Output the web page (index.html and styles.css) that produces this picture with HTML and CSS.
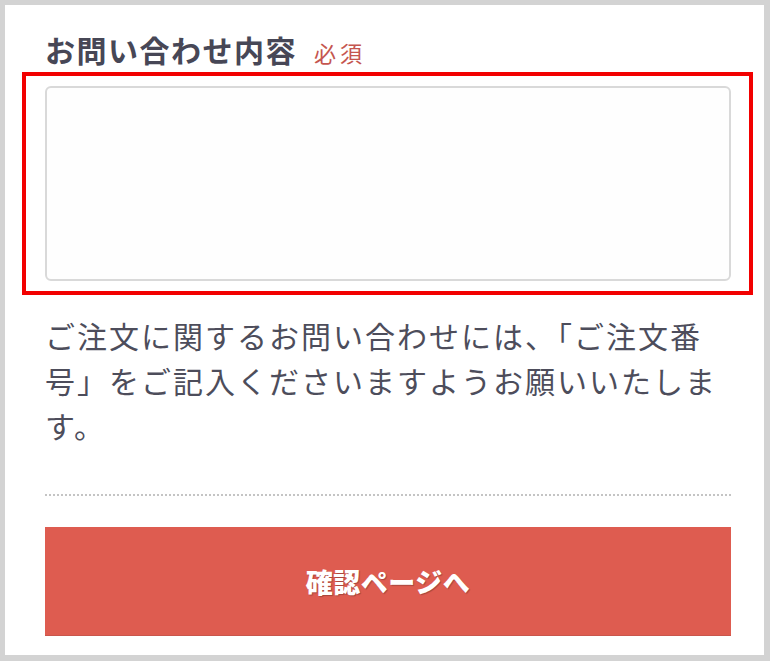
FILE: index.html
```html
<!DOCTYPE html>
<html lang="ja">
<head>
    <meta charset="utf-8">
    <title>お問い合わせ</title>
    <link rel="stylesheet" href="styles.css">
</head>
<body>

    <div class="panel">
        <form id="contactForm">
            <div class="label-row">
                <span class="label">お問い合わせ内容</span>
                <span class="required">必須</span>
            </div>

            <div class="highlight">
                <textarea id="message" class="message"></textarea>
            </div>

            <p class="note">ご注文に関するお問い合わせには、「ご注文番号」をご記入くださいますようお願いいたします。</p>

            <hr class="divider">

            <button type="submit" class="submit">確認ページへ</button>
        </form>
    </div>

</body>
</html>
```

FILE: styles.css
```css
html, body {
    margin: 0;
    height: 100%;
}
body {
    background-color: #d3d3d3;
    padding: 5px 6px 6px 5px;
    box-sizing: border-box;
    font-family: "Noto Sans CJK JP", "Noto Sans", sans-serif;
    color: #4a4a58;
}
.panel {
    background-color: #fff;
    height: 650px;
    box-sizing: border-box;
    padding: 26px 33px 19px 40px;
}
form {
    display: flex;
    flex-direction: column;
}
.label-row {
    display: flex;
    align-items: baseline;
    gap: 17px;
    height: 41px;
}
.label {
    font-size: 30px;
    line-height: 36px;
    font-weight: bold;
    letter-spacing: 1.5px;
    color: #474756;
}
.required {
    font-size: 22px;
    color: #c5564f;
    letter-spacing: 4px;
}

/* red frame drawn round the field */
.highlight {
    margin: 0 -22px 0 -23px;
    padding: 10px 18px 10px 19px;
    border: 4px solid #f20000;
}
.message {
    display: block;
    width: 100%;
    height: 195px;
    box-sizing: border-box;
    border: 2px solid #d9d9d9;
    border-radius: 6px;
    background-color: #fefefe;
    resize: none;
}

.note {
    margin: 18px 0 0 0;
    font-size: 30px;
    line-height: 45px;
    letter-spacing: 2px;
    color: #4d4d5b;
}
.divider {
    margin: 46px 0 0 0;
    border: none;
    border-top: 2px dotted #c4c4c4;
}
.submit {
    margin-top: 31px;
    height: 109px;
    border: none;
    border-bottom: 1px solid #c9564c;
    background-color: #de5c50;
    color: #fff;
    font-family: "Noto Sans CJK JP", sans-serif;
    font-size: 27px;
    font-weight: 900;
    letter-spacing: 0.5px;
    text-shadow: 1px 1px 1px rgba(0, 0, 0, 0.25);
    cursor: pointer;
}
```
